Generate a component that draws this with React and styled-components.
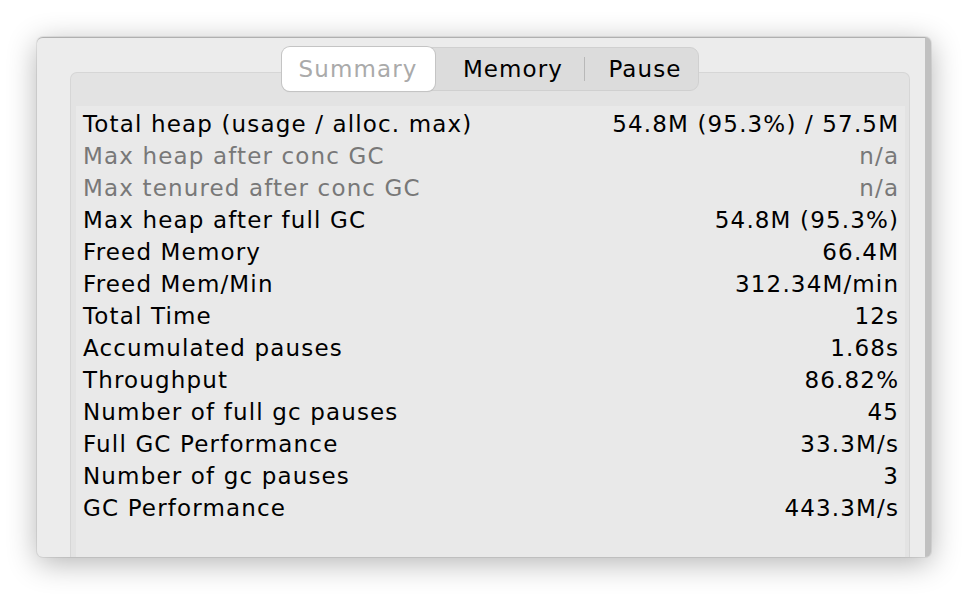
import React from "react";
import styled, { createGlobalStyle } from "styled-components";

const GlobalStyle = createGlobalStyle`
  html, body {
    margin: 0;
    padding: 0;
    background: #ffffff;
  }
  body {
    font-family: "DejaVu Sans", "Noto Sans", sans-serif;
    -webkit-font-smoothing: antialiased;
  }
`;

const rows = [
  { label: "Total heap (usage / alloc. max)", value: "54.8M (95.3%) / 57.5M" },
  { label: "Max heap after conc GC", value: "n/a", disabled: true },
  { label: "Max tenured after conc GC", value: "n/a", disabled: true },
  { label: "Max heap after full GC", value: "54.8M (95.3%)" },
  { label: "Freed Memory", value: "66.4M" },
  { label: "Freed Mem/Min", value: "312.34M/min" },
  { label: "Total Time", value: "12s" },
  { label: "Accumulated pauses", value: "1.68s" },
  { label: "Throughput", value: "86.82%" },
  { label: "Number of full gc pauses", value: "45" },
  { label: "Full GC Performance", value: "33.3M/s" },
  { label: "Number of gc pauses", value: "3" },
  { label: "GC Performance", value: "443.3M/s" },
];

// segment widths measured from the control
const tabs = [
  { name: "Summary", width: 153 },
  { name: "Memory", width: 149 },
  { name: "Pause", width: 113 },
];

const Page = styled.div`
  padding: 37px 0 0 37px;
  height: 594px;
  box-sizing: border-box;
`;

const Window = styled.div`
  width: 894px;
  height: 520px;
  background: #ececec;
  border-top: 1px solid #b0b0b0;
  border-right: 6px solid #c0c0c0;
  border-radius: 6px;
  box-shadow: 0 0 0 1px rgba(0, 0, 0, 0.07), 0 6px 30px rgba(0, 0, 0, 0.3);
  overflow: hidden;
  box-sizing: border-box;
  padding: 9px 15px 0 33px;
  display: flex;
  flex-direction: column;
`;

const TabBar = styled.div`
  display: flex;
  justify-content: center;
  position: relative;
  z-index: 1;
  margin-bottom: -19px;
`;

const Segmented = styled.div`
  display: flex;
  align-items: stretch;
  height: 44px;
  border-radius: 9px;
  background: #dcdcdc;
  border: 1px solid #d0d0d0;
  box-sizing: border-box;
`;

const Tab = styled.div`
  display: flex;
  align-items: center;
  justify-content: center;
  width: ${({ $width }) => $width}px;
  padding-left: ${({ $active }) => ($active ? 0 : 8)}px;
  box-sizing: border-box;
  font-size: 23px;
  letter-spacing: 1.1px;
  color: ${({ $active }) => ($active ? "#aaaaaa" : "#000000")};
  background: ${({ $active }) => ($active ? "#ffffff" : "transparent")};
  border-radius: 8px;
  margin: ${({ $active }) => ($active ? "-1px 0 -1px -1px" : "0")};
  box-shadow: ${({ $active }) =>
    $active ? "0 0 0 1px #c4c4c4, 0 1px 1px rgba(0,0,0,0.15)" : "none"};
  text-shadow: ${({ $active }) => ($active ? "0 1px 0 #ffffff" : "none")};
`;

const Divider = styled.div`
  width: 1px;
  align-self: center;
  height: 24px;
  background: #b8b8b8;
`;

const Pane = styled.div`
  flex: 1;
  border: 1px solid #d6d6d6;
  border-bottom: none;
  border-radius: 7px 7px 0 0;
  background: #e3e3e3;
  padding: 33px 4px 0 5px;
  display: flex;
  flex-direction: column;
`;

const Content = styled.div`
  flex: 1;
  background: #e9e9e9;
  padding: 2px 7px 0 7px;
`;

const Row = styled.div`
  display: flex;
  justify-content: space-between;
  align-items: center;
  height: 32px;
  font-size: 23px;
  letter-spacing: 1.15px;
  color: ${({ $disabled }) => ($disabled ? "#787878" : "#000000")};
  white-space: nowrap;
`;

const Label = styled.span``;

const Value = styled.span`
  text-align: right;
  margin-right: -1.15px;
`;

export default function App() {
  return (
    <>
      <GlobalStyle />
      <Page>
        <Window>
          <TabBar>
            <Segmented>
              {tabs.map((t, i) => (
                <React.Fragment key={t.name}>
                  {i === 2 && <Divider />}
                  <Tab $active={i === 0} $width={t.width}>
                    {t.name}
                  </Tab>
                </React.Fragment>
              ))}
            </Segmented>
          </TabBar>
          <Pane>
            <Content>
              {rows.map((r) => (
                <Row key={r.label} $disabled={r.disabled}>
                  <Label>{r.label}</Label>
                  <Value>{r.value}</Value>
                </Row>
              ))}
            </Content>
          </Pane>
        </Window>
      </Page>
    </>
  );
}
